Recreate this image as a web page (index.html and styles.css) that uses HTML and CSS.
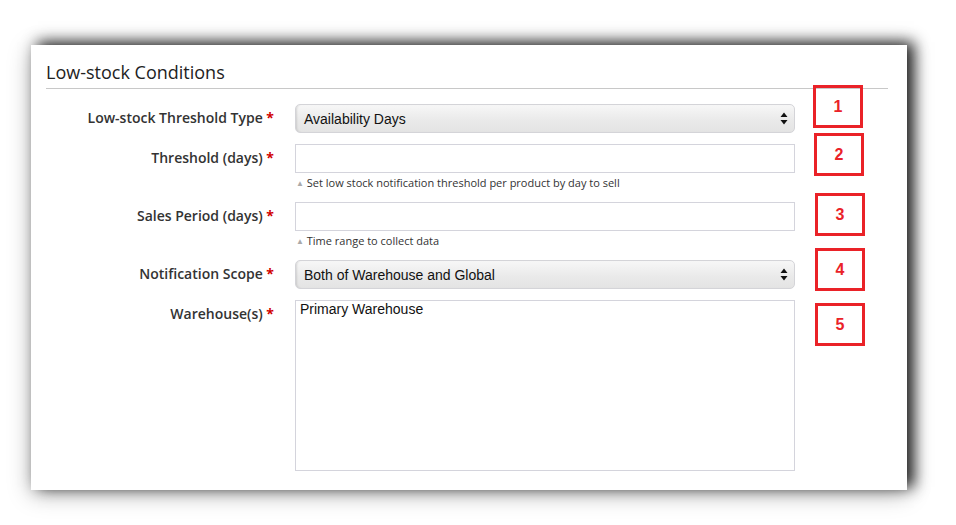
FILE: index.html
```html
<!DOCTYPE html>
<html>
<head>
<meta charset="utf-8">
<link rel="stylesheet" href="styles.css">
</head>
<body>
<div class="page">
  <div class="card">
    <h2 class="title">Low-stock Conditions</h2>
    <div class="form">
      <div class="row">
        <div class="label">Low-stock Threshold Type <span class="req">*</span></div>
        <div class="field">
          <div class="select">
            <span class="select-text">Availability Days</span>
            <svg class="arrows" width="8" height="13" viewBox="0 0 8 13"><path d="M4 0.5 L7.5 5 H0.5 Z M4 12.5 L7.5 8 H0.5 Z" fill="#111"/></svg>
          </div>
        </div>
      </div>
      <div class="row">
        <div class="label">Threshold (days) <span class="req">*</span></div>
        <div class="field">
          <div class="input"></div>
          <div class="help"><span class="tri">▲</span> Set low stock notification threshold per product by day to sell</div>
        </div>
      </div>
      <div class="row">
        <div class="label">Sales Period (days) <span class="req">*</span></div>
        <div class="field">
          <div class="input"></div>
          <div class="help"><span class="tri">▲</span> Time range to collect data</div>
        </div>
      </div>
      <div class="row">
        <div class="label">Notification Scope <span class="req">*</span></div>
        <div class="field">
          <div class="select">
            <span class="select-text">Both of Warehouse and Global</span>
            <svg class="arrows" width="8" height="13" viewBox="0 0 8 13"><path d="M4 0.5 L7.5 5 H0.5 Z M4 12.5 L7.5 8 H0.5 Z" fill="#111"/></svg>
          </div>
        </div>
      </div>
      <div class="row">
        <div class="label">Warehouse(s) <span class="req">*</span></div>
        <div class="field">
          <div class="listbox"><div class="option">Primary Warehouse</div></div>
        </div>
      </div>
    </div>
    <div class="mark m1">1</div>
    <div class="mark m2">2</div>
    <div class="mark m3">3</div>
    <div class="mark m4">4</div>
    <div class="mark m5">5</div>
  </div>
</div>
</body>
</html>
```
FILE: styles.css
```css
html, body {
  margin: 0;
  padding: 0;
  background: #ffffff;
}
.page {
  padding: 45px 0 0 31px;
  height: 525px;
  box-sizing: border-box;
  overflow: hidden;
}
.card {
  position: relative;
  width: 876px;
  height: 445px;
  background: #ffffff;
  box-sizing: border-box;
  padding: 0 19px 0 15px;
  box-shadow: 7px -3px 14px rgba(0,0,0,0.85), 0 4px 22px rgba(0,0,0,0.28);
  font-family: "Open Sans", "Liberation Sans", sans-serif;
}
.title {
  margin: 0;
  padding: 17px 0 6px 0;
  font-size: 18px;
  line-height: 20px;
  font-weight: 400;
  color: #222;
  border-bottom: 1px solid #c8c8c8;
}
.form {
  padding-top: 15px;
}
.row {
  display: flex;
  align-items: flex-start;
  margin-bottom: 11px;
}
.label {
  width: 228px;
  flex: none;
  text-align: right;
  font-size: 14px;
  font-weight: 600;
  color: #333;
  line-height: 20px;
  padding-top: 4px;
  margin-right: 21px;
  white-space: nowrap;
}
.req {
  color: #d00000;
  font-weight: 700;
}
.field {
  width: 500px;
  flex: none;
}
.select {
  position: relative;
  height: 29px;
  box-sizing: border-box;
  border: 1px solid #d4d4d8;
  border-radius: 5px;
  background: linear-gradient(#f7f7f7, #e9e9e9 60%, #e4e4e4);
  box-shadow: inset 2px 0 2px -1px rgba(0,0,0,0.12);
  display: flex;
  align-items: center;
  padding-left: 8px;
}
.select-text {
  font-family: "Liberation Sans", Arial, sans-serif;
  font-size: 14px;
  color: #111;
}
.arrows {
  position: absolute;
  right: 6px;
  top: 7px;
}
.input {
  height: 29px;
  box-sizing: border-box;
  border: 1px solid #d4d4dc;
  background: #fff;
}
.help {
  margin-top: 2px;
  font-size: 11px;
  line-height: 16px;
  color: #333;
  margin-left: 1px;
}
.tri {
  color: #aaa;
  font-size: 8px;
  vertical-align: 1px;
}
.listbox {
  height: 171px;
  box-sizing: border-box;
  border: 1px solid #d4d4dc;
  background: #fff;
  padding: 0 4px;
}
.option {
  font-family: "Liberation Sans", Arial, sans-serif;
  font-size: 14px;
  line-height: 16px;
  color: #111;
}
.mark {
  position: absolute;
  width: 50px;
  height: 43px;
  box-sizing: border-box;
  border: 3px solid #ea2228;
  color: #ea2228;
  font-family: "Liberation Sans", Arial, sans-serif;
  font-weight: 700;
  font-size: 16px;
  display: flex;
  align-items: center;
  justify-content: center;
}
.m1 { left: 782px; top: 40px; }
.m2 { left: 783px; top: 88px; }
.m3 { left: 784px; top: 148px; }
.m4 { left: 784px; top: 203px; }
.m5 { left: 784px; top: 258px; }
```
